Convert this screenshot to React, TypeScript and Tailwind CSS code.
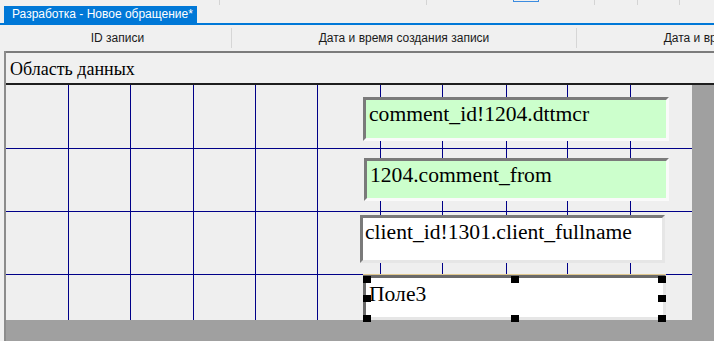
import React from "react";

const fieldText = "text-[21.6px] leading-[21px] text-black whitespace-nowrap";

// widths of the grid cells, right border included
const colWidths = [63, 62, 63, 62, 62, 63, 62, 64, 61, 63];
const rowHeights = [64, 63, 63];

function Handle({ className }: { className: string }) {
  return <div className={`absolute w-[8px] h-[7px] bg-black ${className}`} />;
}

export default function App() {
  return (
    <div className="w-[714px] h-[341px] overflow-hidden bg-[#f0f0f0] flex flex-col font-['Liberation_Sans',Arial,sans-serif]">
      {/* toolbar remnants */}
      <div className="h-[6px] flex items-start">
        <div className="ml-[219px] w-px h-[5px] bg-[#d4d4d4]" />
        <div className="ml-[206px] w-px h-[5px] bg-[#d4d4d4]" />
        <div className="ml-[86px] w-[26px] h-[2px] border-x border-b border-[#3c8ce0]" />
        <div className="ml-[55px] w-px h-[5px] bg-[#d4d4d4]" />
        <div className="ml-[42px] w-px h-[5px] bg-[#d4d4d4]" />
        <div className="ml-[41px] w-px h-[5px] bg-[#d4d4d4]" />
      </div>

      {/* tab */}
      <div className="h-[17px] flex">
        <div className="ml-[4px] w-[193px] bg-[#0078d7] text-white text-[12px] leading-[17px] pl-[8px] whitespace-nowrap">
          Разработка - Новое обращение*
        </div>
      </div>
      <div className="h-[2px] bg-[#0078d7]" />

      {/* column header */}
      <div className="h-[26px] flex items-center pl-[4px] text-[12px] text-[#1a1a1a] whitespace-nowrap">
        <div className="w-[227px] shrink-0 text-center">ID записи</div>
        <div className="w-px h-[20px] bg-[#d6d6d6] shrink-0" />
        <div className="w-[344px] shrink-0 text-center">Дата и время создания записи</div>
        <div className="w-px h-[20px] bg-[#d6d6d6] shrink-0" />
        <div className="w-[344px] shrink-0 text-center">Дата и время создания записи</div>
      </div>

      {/* designer */}
      <div className="flex-1 flex pl-[4px]">
        <div className="flex-1 flex flex-col border-l-2 border-[#8c8c8c]">
          <div className="h-[2px] bg-[#7c7c7c]" />
          <div className="h-[30px] flex items-center pl-[4px] pt-[2px] text-[18px] text-black font-['Liberation_Serif','Times_New_Roman',serif]">
            Область данных
          </div>
          <div className="h-[2px] bg-[#1e1e1e]" />

          <div className="h-[235px] flex">
            <div className="relative w-[686px] bg-[#efefef] font-['Liberation_Serif','Times_New_Roman',serif]">
              {/* grid */}
              <div className="absolute inset-0 flex">
                {colWidths.map((w, i) => (
                  <div key={i} className="h-full border-r border-[#000088] shrink-0" style={{ width: w }} />
                ))}
              </div>
              <div className="absolute inset-0 flex flex-col">
                {rowHeights.map((h, i) => (
                  <div key={i} className="w-full border-b border-[#000088] shrink-0" style={{ height: h }} />
                ))}
              </div>

              <div className="absolute left-[357px] top-[12px] w-[306px] h-[44px] bg-[#ccffcc] border-[3px] border-t-[#7a7a7a] border-l-[#7a7a7a] border-b-[#fafafa] border-r-[#fafafa] pl-[3px] pt-[4px]">
                <div className={fieldText}>comment_id!1204.dttmcr</div>
              </div>

              <div className="absolute left-[358px] top-[73px] w-[305px] h-[43px] bg-[#ccffcc] border-[3px] border-t-[#7a7a7a] border-l-[#7a7a7a] border-b-[#fafafa] border-r-[#fafafa] pl-[3px] pt-[4px]">
                <div className={fieldText}>1204.comment_from</div>
              </div>

              <div className="absolute left-[354px] top-[130px] w-[305px] h-[48px] bg-white border-[3px] border-t-[#7a7a7a] border-l-[#7a7a7a] border-b-[#e6e6e6] border-r-[#e6e6e6] pl-[2px] pt-[4px]">
                <div className={fieldText}>client_id!1301.client_fullname</div>
              </div>

              <div className="absolute left-[357px] top-[190px] w-[303px] h-[45px]">
                <div className="w-full h-full bg-white border-[3px] border-t-[#6a6a6a] border-l-[#6a6a6a] border-b-[#e6e6e6] border-r-[#e6e6e6] pl-[3px] pt-[6px]">
                  <div className={fieldText}>Поле3</div>
                </div>
                <div className="absolute left-0 right-0 -top-px h-px bg-[#e0c890]" />
                <Handle className="left-0 top-[1px]" />
                <Handle className="left-[148px] top-[1px]" />
                <Handle className="right-0 top-[1px]" />
                <Handle className="left-0 top-[20px]" />
                <Handle className="right-0 top-[20px]" />
                <Handle className="left-0 top-[40px]" />
                <Handle className="left-[148px] top-[40px]" />
                <Handle className="right-0 top-[40px]" />
              </div>
            </div>
            <div className="flex-1 bg-[#a0a0a0]" />
          </div>
          <div className="flex-1 bg-[#a0a0a0]" />
        </div>
      </div>
    </div>
  );
}
